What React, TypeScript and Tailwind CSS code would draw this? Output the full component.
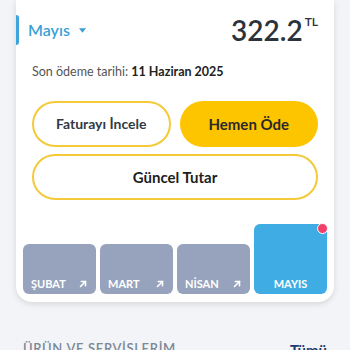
// Fatura özeti kartı: dönem seçimi, tutar, aksiyon butonları ve ay sekmeleri.
const MONTHS = [
  { label: "ŞUBAT", active: false },
  { label: "MART", active: false },
  { label: "NİSAN", active: false },
  { label: "MAYIS", active: true },
];

function ArrowUpRight() {
  return (
    <svg width="10" height="10" viewBox="0 0 12 12" fill="none" stroke="white" strokeWidth="1.9" strokeLinecap="round">
      <path d="M3 9 L9 3" />
      <path d="M4 3 H9 V8" />
    </svg>
  );
}

export default function App() {
  return (
    <div
      className="min-h-[350px] w-[350px] overflow-hidden bg-[#f3f4f7]"
      style={{ fontFamily: "Lato, 'Noto Sans', sans-serif" }}
    >
      {/* Kart */}
      <section className="mx-4 rounded-b-2xl bg-white pb-2 shadow-[0_2px_6px_rgba(0,0,0,0.12)]">
        <div className="flex items-center justify-between pt-[15px] pr-4">
          <div className="flex h-[30px] items-center">
            <div className="h-[30px] w-[3px] rounded-r bg-[#3fa4dc]" />
            <span className="ml-[9px] text-[16px] font-semibold text-[#3a9fd8]">Mayıs</span>
            <svg className="ml-[9px]" width="7" height="5" viewBox="0 0 8 5">
              <path d="M0 0 H8 L4 5 Z" fill="#3a9fd8" />
            </svg>
          </div>
          <div className="flex items-start text-[#2b323b]">
            <span className="text-[28px] font-semibold leading-none">322.2</span>
            <span className="ml-[2px] text-[12px] font-semibold leading-none">TL</span>
          </div>
        </div>

        <p className="mt-[18px] pl-4 text-[12.5px] text-[#555]">
          Son ödeme tarihi: <span className="font-bold text-[#222]">11 Haziran 2025</span>
        </p>

        <div className="mt-[19px] grid grid-cols-2 gap-[9px] px-4">
          <button className="h-[46px] rounded-full border-2 border-[#f4c93a] bg-white text-[14px] font-bold text-[#333a45]">
            Faturayı İncele
          </button>
          <button className="h-[46px] rounded-full bg-[#fcc500] text-[15px] font-bold text-[#2a2a2a]">
            Hemen Öde
          </button>
        </div>
        <div className="mt-[7px] px-4">
          <button className="h-[46px] w-full rounded-full border-2 border-[#f4c93a] bg-white text-[15px] font-bold text-[#1e1e1e]">
            Güncel Tutar
          </button>
        </div>

        {/* Ay sekmeleri */}
        <div className="mt-[24px] grid grid-cols-4 items-end gap-1 px-[7px]">
          {MONTHS.map((m) =>
            m.active ? (
              <div key={m.label} className="relative flex h-[70px] items-end justify-center rounded-md bg-[#3fade4] pb-[5px]">
                <span className="text-[11px] font-bold leading-none text-white">{m.label}</span>
                <span className="absolute -right-[1px] -top-[1px] h-[11px] w-[11px] rounded-full border border-white bg-[#f2406a]" />
              </div>
            ) : (
              <div key={m.label} className="flex h-[50px] items-end justify-between rounded-md bg-[#97a3bc] px-[8px] pb-[5px]">
                <span className="text-[11px] font-bold leading-none text-white">{m.label}</span>
                <ArrowUpRight />
              </div>
            )
          )}
        </div>
      </section>

      <div className="mt-[37px] flex items-start justify-between px-[23px]">
        <h3 className="text-[13px] font-semibold tracking-[0.05em] text-[#7c8796]">ÜRÜN VE SERVİSLERİM</h3>
        <span className="text-[15px] font-bold text-[#1f3a6d]">Tümü</span>
      </div>
    </div>
  );
}
